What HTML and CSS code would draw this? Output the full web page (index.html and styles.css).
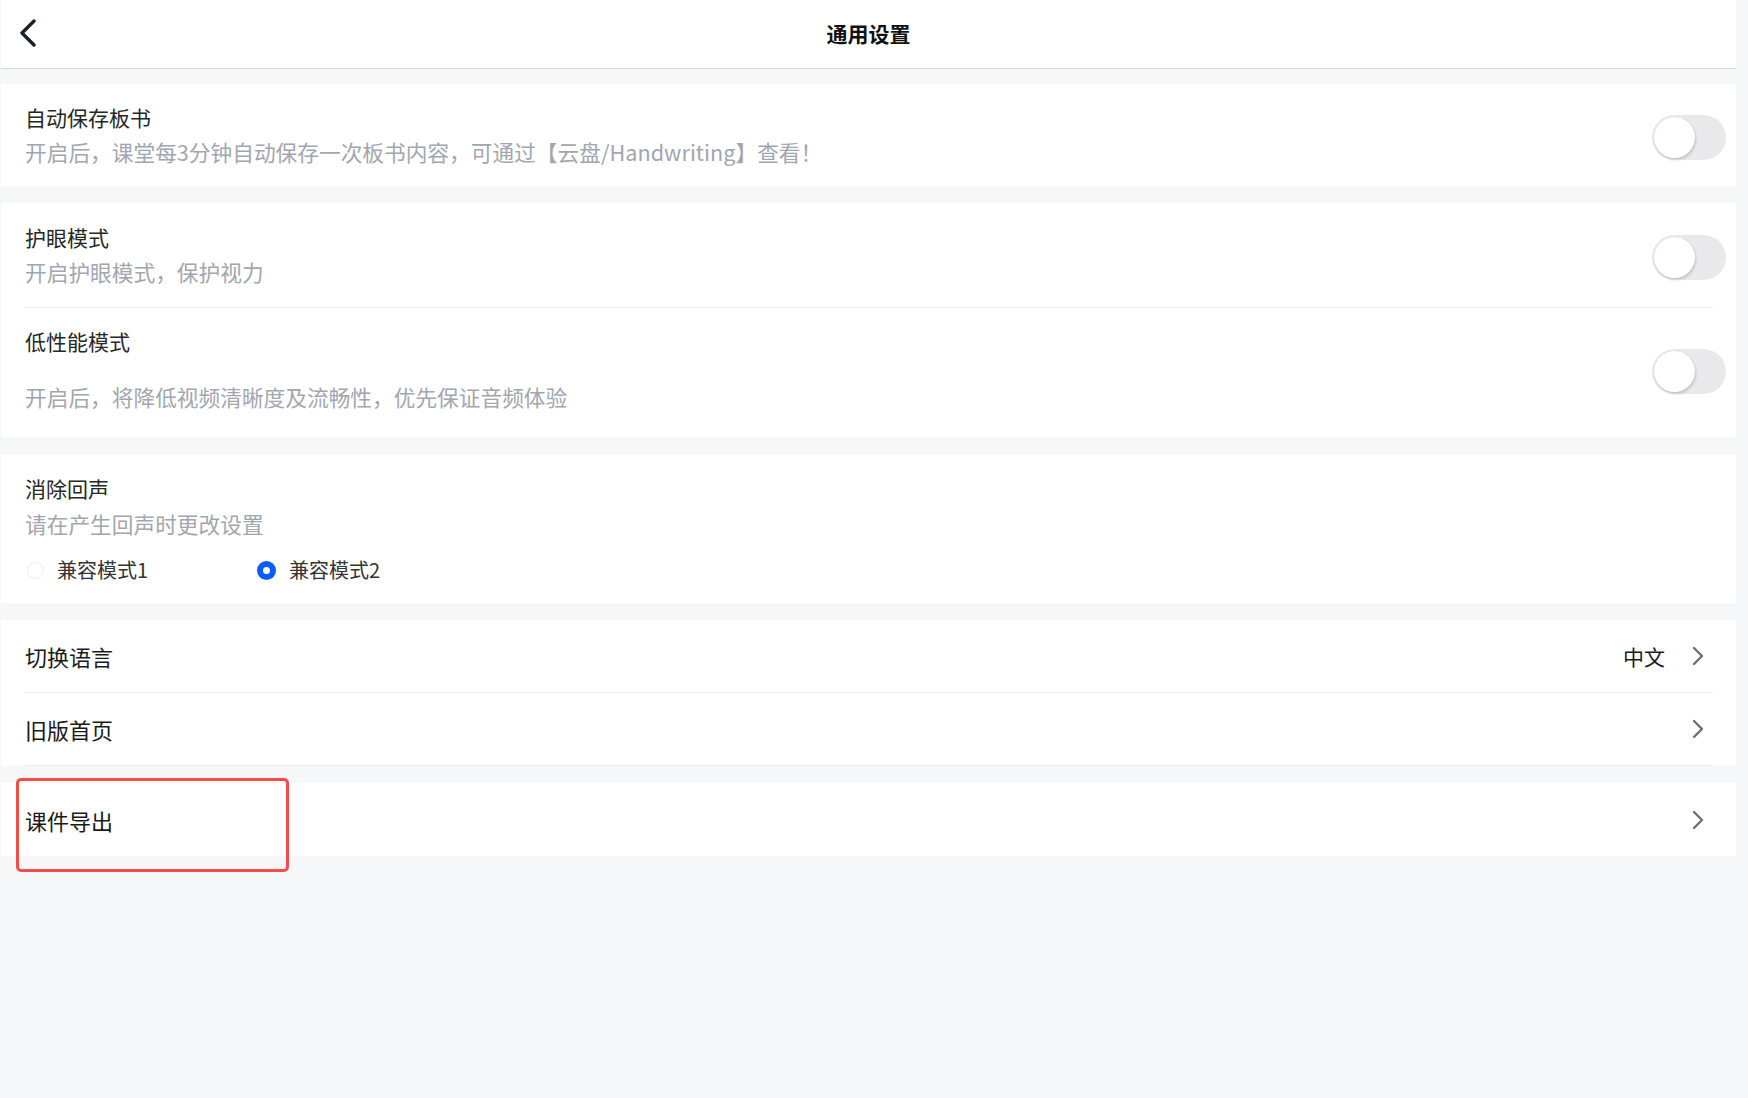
FILE: index.html
```html
<!DOCTYPE html>
<html lang="zh-CN">
<head>
<meta charset="UTF-8">
<meta name="viewport" content="width=device-width, initial-scale=1.0">
<title>通用设置</title>
<link rel="stylesheet" href="styles.css">
</head>
<body>
    <div class="page">
        <header class="topbar">
            <svg class="back-icon" width="18" height="28" viewBox="0 0 18 28">
                <path d="M15 2 L3 14 L15 26" fill="none" stroke="#1b1f2e" stroke-width="3.4" stroke-linecap="round" stroke-linejoin="round"/>
            </svg>
            <h1 class="topbar-title">通用设置</h1>
        </header>

        <!-- 自动保存 -->
        <section class="card card-first">
            <div class="setting setting-save">
                <div class="setting-text">
                    <div class="setting-title">自动保存板书</div>
                    <div class="setting-desc">开启后，课堂每3分钟自动保存一次板书内容，可通过【云盘/Handwriting】查看！</div>
                </div>
                <span class="switch"><span class="switch-knob"></span></span>
            </div>
        </section>

        <!-- 护眼 / 低性能 -->
        <section class="card">
            <div class="setting setting-eye">
                <div class="setting-text">
                    <div class="setting-title">护眼模式</div>
                    <div class="setting-desc">开启护眼模式，保护视力</div>
                </div>
                <span class="switch"><span class="switch-knob"></span></span>
            </div>
            <div class="divider"></div>
            <div class="setting setting-low">
                <div class="setting-text setting-text-wide">
                    <div class="setting-title">低性能模式</div>
                    <div class="setting-desc">开启后，将降低视频清晰度及流畅性，优先保证音频体验</div>
                </div>
                <span class="switch"><span class="switch-knob"></span></span>
            </div>
        </section>

        <!-- 消除回声 -->
        <section class="card card-echo">
            <div class="setting setting-echo">
                <div class="setting-text">
                    <div class="setting-title">消除回声</div>
                    <div class="setting-desc">请在产生回声时更改设置</div>
                    <div class="radio-group">
                        <label class="radio-item"><span class="radio"></span>兼容模式1</label>
                        <label class="radio-item"><span class="radio radio-on"></span>兼容模式2</label>
                    </div>
                </div>
            </div>
        </section>

        <section class="card">
            <div class="menu-row">
                <span class="menu-label">切换语言</span>
                <span class="menu-value">中文</span>
                <svg class="chevron" width="12" height="20" viewBox="0 0 12 20">
                    <path d="M2 2 L10 10 L2 18" fill="none" stroke="#6a6f7b" stroke-width="2.4" stroke-linecap="round" stroke-linejoin="round"/>
                </svg>
            </div>
            <div class="divider"></div>
            <div class="menu-row">
                <span class="menu-label">旧版首页</span>
                <svg class="chevron" width="12" height="20" viewBox="0 0 12 20">
                    <path d="M2 2 L10 10 L2 18" fill="none" stroke="#6a6f7b" stroke-width="2.4" stroke-linecap="round" stroke-linejoin="round"/>
                </svg>
            </div>
            <div class="divider"></div>
        </section>

        <section class="card card-export">
            <div class="menu-row menu-row-export">
                <span class="menu-label">课件导出</span>
                <svg class="chevron" width="12" height="20" viewBox="0 0 12 20">
                    <path d="M2 2 L10 10 L2 18" fill="none" stroke="#6a6f7b" stroke-width="2.4" stroke-linecap="round" stroke-linejoin="round"/>
                </svg>
            </div>
            <!-- 标注框 -->
            <div class="highlight-box"></div>
        </section>
    </div>
</body>
</html>
```

FILE: styles.css
```css
body {
    margin: 0;
    padding: 0;
    background-color: #f6f7f9;
    font-family: "Noto Sans CJK SC", "Noto Sans", sans-serif;
    height: 100vh;
}

.page {
    margin: 0 12px 0 1px;
}

.topbar {
    height: 68px;
    background-color: #fff;
    border-bottom: 1px solid #d9d9dc;
    display: flex;
    align-items: center;
    justify-content: center;
    position: relative;
}

.back-icon {
    position: absolute;
    left: 18px;
    top: 19px;
}

.topbar-title {
    margin: 0 0 2px 0;
    font-size: 21px;
    font-weight: 700;
    color: #111;
    line-height: 30px;
}

.card {
    background-color: #fff;
    margin-top: 17px;
}

.card-first {
    margin-top: 15px;
}

.card-echo {
    margin-top: 18px;
}

.setting {
    display: flex;
    align-items: center;
    justify-content: space-between;
    padding: 18px 10px 19px 24px;
}

.setting-text {
    display: flex;
    flex-direction: column;
    gap: 5px;
}

.setting-eye {
    padding-top: 19px;
    padding-bottom: 20px;
}

.setting-low {
    padding-top: 18px;
    padding-bottom: 25px;
}

.setting-text-wide {
    gap: 26px;
}

.setting-title {
    font-size: 21px;
    line-height: 30px;
    color: #262626;
}

.setting-desc {
    font-size: 21.7px;
    line-height: 30px;
    color: #a2a6ae;
}

.divider {
    height: 1px;
    background-color: #ececee;
    margin: 0 23px 0 24px;
}

.switch {
    width: 74px;
    height: 45px;
    margin-top: 5px;
    border-radius: 23px;
    background-color: #e9e9eb;
    display: flex;
    align-items: center;
    padding-left: 2px;
    box-sizing: border-box;
    flex-shrink: 0;
}

.switch-knob {
    width: 41px;
    height: 41px;
    border-radius: 50%;
    background-color: #fff;
    box-shadow: 1px 2px 3px rgba(0, 0, 0, 0.15), 0 0 1px rgba(0, 0, 0, 0.12);
}

.setting-echo {
    padding-bottom: 18px;
}

.setting-echo .setting-text {
    gap: 6px;
}

.radio-group {
    display: flex;
    margin-top: 10px;
    margin-left: 2px;
}

.radio-item {
    width: 230px;
    display: flex;
    align-items: center;
    gap: 13px;
    font-size: 20px;
    line-height: 30px;
    color: #333;
}

.radio {
    width: 17px;
    height: 17px;
    border-radius: 50%;
    border: 1px solid #ededef;
    box-sizing: border-box;
    background-color: #fff;
}

.radio-on {
    width: 19px;
    height: 19px;
    border: 6px solid #0a5cff;
    background-color: #fff;
}

.menu-row {
    height: 72px;
    display: flex;
    align-items: center;
    padding: 0 32px 0 24px;
}

.menu-row-export {
    height: 73px;
}

.menu-label {
    flex: 1;
    font-size: 22px;
    color: #1a1a1a;
}

.menu-value {
    font-size: 21px;
    color: #1a1a1a;
    margin-right: 27px;
}

.card-export {
    position: relative;
}

.highlight-box {
    position: absolute;
    left: 15px;
    top: -5px;
    width: 273px;
    height: 94px;
    border: 3px solid #f24d4a;
    border-radius: 5px;
    box-sizing: border-box;
}
```
